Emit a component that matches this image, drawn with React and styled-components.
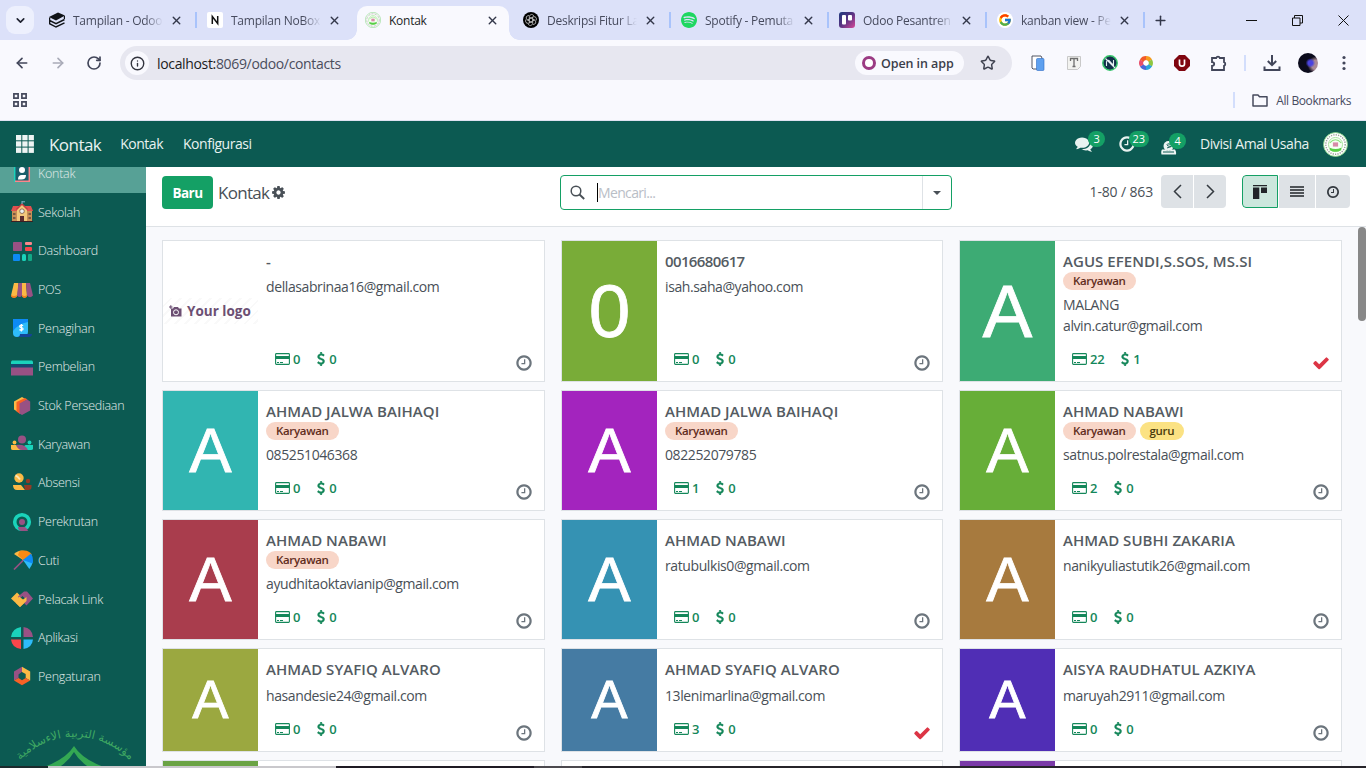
import React from "react";
import styled, { createGlobalStyle, css } from "styled-components";
import { ArrowLeft, ArrowRight, RotateCw, Info, Star, X, Plus, ChevronDown } from "lucide-react";
import { SiSpotify } from "react-icons/si";
import { FcGoogle } from "react-icons/fc";

const GlobalStyle = createGlobalStyle`
  * { box-sizing: border-box; }
  body {
    margin: 0;
    width: 1366px;
    height: 768px;
    overflow: hidden;
    font-family: "Open Sans", "Noto Sans", sans-serif;
    color: #495057;
    background: #f8f9fc;
  }
`;

const Screen = styled.div`
  display: flex;
  flex-direction: column;
  width: 1366px;
  height: 768px;
  overflow: hidden;
`;

/* ---------- Browser tabs ---------- */

const TabStrip = styled.div`
  display: flex;
  align-items: center;
  flex: none;
  height: 40px;
  padding-left: 6px;
  background: #dce1f9;
`;

const TabSearch = styled.div`
  display: flex;
  align-items: center;
  justify-content: center;
  width: 28px;
  height: 28px;
  margin-right: 7px;
  border-radius: 9px;
  background: #edf0fd;
  color: #1f2230;
`;

const TabBox = styled.div`
  position: relative;
  display: flex;
  align-items: center;
  flex: none;
  width: 158px;
  height: 40px;
  padding: 0 0 0 8px;
  color: #474b5e;
  ${(p) =>
    p.$sep &&
    css`
      &::after {
        content: "";
        position: absolute;
        right: 2px;
        top: 12px;
        width: 2px;
        height: 16px;
        background: #a9c3fb;
      }
    `}
  ${(p) =>
    p.$active &&
    css`
      color: #1d1f26;
      &::before {
        content: "";
        position: absolute;
        left: 0;
        right: 6px;
        top: 6px;
        bottom: 0;
        border-radius: 10px 10px 0 0;
        background: #f9f9fe;
      }
    `}
`;

const TabFlare = styled.i`
  position: absolute;
  bottom: 0;
  left: ${(p) => (p.$right ? "152px" : "-10px")};
  width: 10px;
  height: 10px;
  background: radial-gradient(circle at ${(p) => (p.$right ? "100%" : "0")} 0, transparent 9.5px, #f9f9fe 10px);
`;

const Favicon = styled.span`
  position: relative;
  display: flex;
  width: 16px;
  height: 16px;
  margin-right: 8px;
  svg { display: block; }
`;

const TabTitle = styled.span`
  position: relative;
  width: 90px;
  padding-top: 1px;
  overflow: hidden;
  white-space: nowrap;
  font-size: 12px;
  line-height: 18px;
  letter-spacing: -0.25px;
  ${(p) => !p.$solid && css`mask-image: linear-gradient(90deg, #000 80%, transparent 100%);`}
`;

const TabClose = styled.span`
  position: relative;
  display: flex;
  margin-left: 7px;
  color: #33374a;
`;

const WindowControls = styled.div`
  display: flex;
  align-items: center;
  gap: 35px;
  margin-left: auto;
  padding-right: 17px;
  color: #111;
  svg { display: block; }
`;

const NewTab = styled.div`
  display: flex;
  margin-left: 6px;
  color: #33374a;
`;

/* ---------- Browser toolbar ---------- */

const Toolbar = styled.div`
  display: flex;
  align-items: center;
  flex: none;
  height: 46px;
  padding: 0 0 0 14px;
  background: #f9f9fe;
  color: #474b5e;
`;

const NavButton = styled.span`
  display: flex;
  flex: none;
  margin-right: 20px;
  color: ${(p) => (p.$dim ? "#a9abb8" : "#42465a")};
`;

const Omnibox = styled.div`
  display: flex;
  align-items: center;
  flex: none;
  width: 892px;
  height: 34px;
  margin-left: -2px;
  padding-left: 5px;
  border-radius: 17px;
  background: #e7e7f0;
`;

const InfoButton = styled.span`
  display: flex;
  align-items: center;
  justify-content: center;
  width: 24px;
  height: 24px;
  margin-right: 8px;
  border-radius: 12px;
  background: #f9f9fe;
  color: #33353f;
`;

const Url = styled.span`
  font-size: 14px;
  letter-spacing: -0.34px;
  color: #4a4d5c;
  b { font-weight: 400; color: #1b1c22; }
`;

const OpenInApp = styled.span`
  display: flex;
  align-items: center;
  gap: 5px;
  width: 109px;
  height: 24px;
  margin-left: auto;
  padding-left: 7px;
  border-radius: 12px;
  background: #f9f9fe;
  font-size: 12.5px;
  font-weight: 600;
  letter-spacing: -0.08px;
  white-space: nowrap;
  color: #3b3e4a;
`;

const Ring = styled.i`
  width: 14px;
  height: 14px;
  border: 3px solid #9b3b83;
  border-radius: 50%;
  background: #fff;
`;

const StarSlot = styled.span`
  display: flex;
  margin: 0 16px;
  color: #3f4250;
`;

const Extensions = styled.div`
  display: flex;
  align-items: center;
  gap: 20px;
  margin-left: 18px;
  svg { display: block; }
`;

const Divider = styled.i`
  flex: none;
  width: 2px;
  height: 16px;
  margin: 0 17px 0 16px;
  background: #d3defc;
`;

const ToolbarEnd = styled.div`
  display: flex;
  align-items: center;
  svg { display: block; }
`;

const Avatar = styled.i`
  width: 20px;
  height: 20px;
  margin: 0 17px;
  border-radius: 50%;
  background:
    radial-gradient(circle at 62% 50%, #4a43e0 0 14%, transparent 30%),
    radial-gradient(circle at 92% 60%, #a98a96 0 22%, transparent 40%),
    #0b0b1c;
`;

const Bookmarks = styled.div`
  display: flex;
  align-items: center;
  flex: none;
  height: 35px;
  padding: 0 15px 6px 12px;
  border-bottom: 1px solid #dfe2f1;
  background: #f9f9fe;
  font-size: 12px;
  letter-spacing: -0.4px;
  color: #474b5e;
  svg { display: block; }
`;

const BookmarksEnd = styled.div`
  display: flex;
  align-items: center;
  margin-left: auto;
  svg { margin-right: 8px; }
`;

/* ---------- Odoo navbar ---------- */

const Navbar = styled.div`
  display: flex;
  align-items: center;
  flex: none;
  height: 46px;
  padding: 0 18px 0 16px;
  background: #0c5a52;
  color: #e8f2f0;
  font-size: 14px;
`;

const AppTitle = styled.span`
  margin: 0 19px 0 15px;
  font-size: 17px;
  letter-spacing: -0.55px;
`;

const MenuEntry = styled.span`
  margin: -2px 20px 0 0;
  letter-spacing: -0.48px;
`;

const Systray = styled.div`
  display: flex;
  align-items: center;
  margin-left: auto;
`;

const TrayItem = styled.span`
  position: relative;
  display: flex;
  width: ${(p) => p.$w}px;
  margin-top: ${(p) => p.$drop || 0}px;
`;

const TrayBadge = styled.span`
  position: absolute;
  left: ${(p) => p.$x}px;
  top: ${(p) => p.$y}px;
  height: 16px;
  padding: 0 ${(p) => p.$pad || 5.5}px;
  border-radius: 8px;
  background: #14a065;
  color: #fff;
  font-size: 11px;
  line-height: 16px;
`;

const UserName = styled.span`
  margin: -2px 14px 0 0;
  letter-spacing: -0.4px;
`;

/* ---------- Body ---------- */

const Body = styled.div`
  display: flex;
  flex: 1;
  min-height: 0;
`;

const Sidebar = styled.div`
  display: flex;
  flex-direction: column;
  flex: none;
  width: 146px;
  overflow: hidden;
  background: #0c5a52;
`;

const SideList = styled.div`
  flex: none;
  margin-top: -12.9px;
`;

const SideItem = styled.div`
  display: flex;
  align-items: center;
  height: 38.7px;
  padding-left: 11px;
  gap: 5px;
  background: ${(p) => (p.$active ? "#57a196" : "transparent")};
  color: #e2ecea;
  font-size: 12.5px;
  font-weight: 300;
  letter-spacing: -0.26px;
  white-space: nowrap;
  svg { display: block; flex: none; }
`;

const SideLogo = styled.svg`
  display: block;
  flex: none;
  margin-top: 28.5px;
`;

const Main = styled.div`
  display: flex;
  flex-direction: column;
  flex: 1;
  min-width: 0;
`;

const ControlPanel = styled.div`
  display: grid;
  grid-template-columns: 398px 392px 1fr;
  flex: none;
  height: 60px;
  padding: 8px 16px 0;
  border-bottom: 1px solid #dee2e6;
  background: #fff;
`;

const Breadcrumb = styled.div`
  display: flex;
  align-items: center;
  height: 35px;
  font-size: 17px;
  letter-spacing: -0.7px;
  color: #495057;
`;

const PrimaryButton = styled.button`
  width: 51px;
  height: 33px;
  margin: 0 5px 0 0;
  padding: 0;
  border: 0;
  border-radius: 4px;
  background: #14a065;
  color: #fff;
  font: 700 13.5px "Open Sans", "Noto Sans", sans-serif;
  letter-spacing: -0.5px;
`;

const GearSlot = styled.span`
  display: flex;
  margin-left: 3px;
`;

const SearchBox = styled.div`
  display: flex;
  align-items: center;
  height: 35px;
  border: 1px solid #14a065;
  border-radius: 4px;
  padding-left: 9px;
`;

const SearchField = styled.span`
  margin-left: 12px;
  border-left: 1px solid #000;
  font-size: 14px;
  line-height: 19px;
  letter-spacing: -0.65px;
  color: #b9bec6;
`;

const SearchToggle = styled.span`
  display: flex;
  align-items: center;
  justify-content: center;
  width: 29px;
  height: 33px;
  margin-left: auto;
  border-left: 1px solid #dee2e6;
`;

const Caret = styled.i`
  border: 4.5px solid transparent;
  border-top: 4.5px solid #495057;
  border-bottom: 0;
`;

const PagerArea = styled.div`
  display: flex;
  align-items: center;
  justify-content: flex-end;
  height: 33px;
`;

const PagerText = styled.span`
  margin-right: 8px;
  font-size: 14px;
  letter-spacing: -0.15px;
`;

const ButtonGroup = styled.div`
  display: flex;
  gap: 1px;
  margin-left: ${(p) => p.$ml || 0}px;
  border-radius: 4px;
  overflow: hidden;
`;

const GroupButton = styled.span`
  display: flex;
  align-items: center;
  justify-content: center;
  width: ${(p) => p.$w}px;
  height: 33px;
  background: #dee2e6;
  color: #343a40;
  ${(p) =>
    p.$on &&
    css`
      border: 1px solid #14a065;
      border-radius: 4px 0 0 4px;
      background: #cce7dd;
      color: #212529;
    `}
`;

const KanbanWrap = styled.div`
  display: flex;
  justify-content: space-between;
  flex: 1;
  min-height: 0;
  overflow: hidden;
  background: #f8f9fc;
`;

const ScrollThumb = styled.div`
  flex: none;
  width: 8px;
  height: 94px;
  border-radius: 4px;
  background: #888;
`;

const Grid = styled.div`
  display: grid;
  grid-template-columns: 383px 382px 383px;
  grid-template-rows: 142px 121px 121px 104px 104px;
  gap: 8px 16px;
  width: 1180px;
  height: 624px;
  margin: 13px 0 0 16px;
`;

const Card = styled.div`
  display: flex;
  border: 1px solid #dee2e6;
  background: #fff;
`;

const Picture = styled.div`
  display: flex;
  align-items: center;
  justify-content: center;
  flex: none;
  width: 95px;
  padding-top: 1px;
  background: ${(p) => p.$bg};
  color: #fff;
  font-family: "Liberation Sans", Arial, sans-serif;
  font-size: ${(p) => p.$size}px;
  line-height: 1;
  -webkit-text-stroke: 0.8px #fff;
`;

const LogoPlaceholder = styled.div`
  display: flex;
  align-items: center;
  gap: 5px;
  width: 95px;
  height: 26px;
  margin-top: -1px;
  padding-left: 6px;
  white-space: nowrap;
  background: repeating-linear-gradient(135deg, #fff 0 5px, #f9f9f9 5px 7px);
  color: #6c4f73;
  font: 700 13.5px "Open Sans", "Noto Sans", sans-serif;
  letter-spacing: 0;
  -webkit-text-stroke: 0;
  svg { flex: none; }
`;

const Details = styled.div`
  display: flex;
  flex-direction: column;
  flex: 1;
  min-width: 0;
  padding: 11px 12px 8px 8px;
`;

const Name = styled.div`
  margin-bottom: 2px;
  font-size: 15px;
  font-weight: 600;
  line-height: 18px;
  letter-spacing: ${(p) => (p.$digits ? "-0.62px" : "0.05px")};
  white-space: nowrap;
  color: #545b62;
`;

const Tags = styled.div`
  display: flex;
  gap: 4px;
  margin-bottom: 4px;
`;

const Tag = styled.span`
  height: 18px;
  padding: 0 10px;
  border-radius: 9px;
  background: ${(p) => (p.$kind === "guru" ? "#fbe283" : "#f8d6c8")};
  color: ${(p) => (p.$kind === "guru" ? "#4a3c0c" : "#5f2c1c")};
  font-size: 11.5px;
  font-weight: 600;
  line-height: 17px;
  letter-spacing: -0.33px;
`;

const Line = styled.div`
  margin-top: ${(p) => p.$mt || 0}px;
  font-size: 14px;
  line-height: 21px;
  letter-spacing: -0.4px;
  white-space: nowrap;
  color: #495057;
`;

const CardFooter = styled.div`
  display: flex;
  align-items: flex-end;
  margin-top: auto;
  padding-left: 9px;
`;

const Stat = styled.span`
  display: flex;
  align-items: center;
  gap: ${(p) => p.$gap}px;
  margin: 0 17px 4px 0;
  font-size: 13px;
  font-weight: 600;
  line-height: 20px;
  letter-spacing: -0.3px;
  color: #14875a;
`;

const Activity = styled.span`
  display: flex;
  margin-left: auto;
  margin-right: ${(p) => (p.$done ? "-1px" : 0)};
  margin-bottom: 1px;
`;

const Taskbar = styled.div`
  display: flex;
  flex: none;
  height: 2px;
  background: #26242a;
`;

const TaskbarPart = styled.i`
  width: ${(p) => p.$w}px;
  background: ${(p) => p.$bg};
`;

/* ---------- Icons ---------- */

const GLYPHS = {
  clock: ["0 0 1536 1792", "M896 544v448q0 14-9 23t-23 9h-320q-14 0-23-9t-9-23v-64q0-14 9-23t23-9h224v-352q0-14 9-23t23-9h64q14 0 23 9t9 23zm416 352q0-148-73-273t-198-198-273-73-273 73-198 198-73 273 73 273 198 198 273 73 273-73 198-198 73-273zm224 0q0 209-103 385.5t-279.5 279.5-385.5 103-385.5-103-279.5-279.5-103-385.5 103-385.5 279.5-279.5 385.5-103 385.5 103 279.5 279.5 103 385.5z"],
  check: ["0 0 1792 1792", "M1671 566q0 40-28 68l-724 724-136 136q-28 28-68 28t-68-28l-136-136-362-362q-28-28-28-68t28-68l136-136q28-28 68-28t68 28l294 295 656-657q28-28 68-28t68 28l136 136q28 28 28 68z"],
  cog: ["128 0 1536 1792", "M1152 896q0-106-75-181t-181-75-181 75-75 181 75 181 181 75 181-75 75-181zm512-109v222q0 12-8 23t-20 13l-185 28q-19 54-39 91 35 50 107 138 10 12 10 25t-9 23q-27 37-99 108t-94 71q-12 0-26-9l-138-108q-44 23-91 38-16 136-29 186-7 28-36 28h-222q-14 0-24.5-8.5t-11.5-21.5l-28-184q-49-16-90-37l-141 107q-10 9-25 9-14 0-25-11-126-114-165-168-7-10-7-23 0-12 8-23 15-21 51-66.5t54-70.5q-27-50-41-99l-183-27q-13-2-21-12.5t-8-23.5v-222q0-12 8-23t19-13l186-28q14-46 39-92-40-57-107-138-10-12-10-24 0-10 9-23 26-36 98.5-107.5t94.5-71.5q13 0 26 10l138 107q44-23 91-38 16-136 29-186 7-28 36-28h222q14 0 24.5 8.5t11.5 21.5l28 184q49 16 90 37l142-107q9-9 24-9 13 0 25 10 129 119 165 170 7 8 7 22 0 12-8 23-15 21-51 66.5t-54 70.5q26 50 41 98l183 28q13 2 21 12.5t8 23.5z"],
  comments: ["0 0 1792 1792", "M1408 768q0 139-94 257t-256.5 186.5-353.5 68.5q-86 0-176-16-124 88-278 128-36 9-86 16h-3q-11 0-20.5-8t-11.5-21q-1-3-1-6.5t.5-6.5 2-6l2.5-5 3.5-5.5 4-5 4.5-5 4-4.5q5-6 23-25t26-29.5 22.5-29 25-38.5 20.5-44q-124-72-195-177t-71-224q0-139 94-257t256.5-186.5 353.5-68.5 353.5 68.5 256.5 186.5 94 257zm384 256q0 120-71 224.5t-195 176.5q10 24 20.5 44t25 38.5 22.5 29 26 29.5 23 25q1 1 4 4.5t4.5 5 4 5 3.5 5.5l2.5 5 2 6 .5 6.5-1 6.5q-3 14-13 22t-22 7q-50-7-86-16-154-40-278-128-90 16-176 16-271 0-472-132 58 4 88 4 161 0 309-45t264-129q125-92 192-212t67-254q0-77-23-152 129 71 204 178t75 230z"],
  dollar: ["384 0 1024 1792", "M1362 1185q0 153-99.5 263.5t-258.5 136.5v175q0 14-9 23t-23 9h-135q-13 0-22.5-9.5t-9.5-22.5v-175q-66-9-127.5-31t-101.5-44.5-74-48-46.5-37.5-17.5-18q-17-21-2-41l103-135q7-10 23-12 15-2 24 9l2 2q113 99 243 125 37 8 74 8 81 0 142.5-43t61.5-122q0-28-15-53t-33.5-42-58.5-37.5-66-32-80-32.5q-39-16-61.5-25t-61.5-26.5-62.5-31-56.5-35.5-53.5-42.5-43.5-49-35.5-58-21-66.5-8.5-78q0-138 98-242t255-134v-180q0-13 9.5-22.5t22.5-9.5h135q14 0 23 9t9 23v176q57 6 110.5 23t87 33.5 63.5 37.5 39 29 15 14q17 18 5 38l-81 146q-8 15-23 16-14 3-27-7-3-3-14.5-12t-39-26.5-58.5-32-74.5-26-85.5-11.5q-95 0-155 43t-60 111q0 26 8.5 48t29.5 41.5 39.5 33 56 31 60.5 27 70 27.5q53 20 81 31.5t76 35 75.5 42.5 62 50 53 63.5 31.5 76.5 13 94z"],
};

const Glyph = ({ name, w, h, color = "currentColor", stroke = 0 }) => (
  <svg width={w} height={h} viewBox={GLYPHS[name][0]} fill={color} stroke={color} strokeWidth={stroke}>
    <path d={GLYPHS[name][1]} />
  </svg>
);

const CardGlyph = () => (
  <svg width="15" height="12" viewBox="0 0 15 12">
    <rect x="0.6" y="0.6" width="13.8" height="10.8" rx="0.8" fill="none" stroke="#14875a" strokeWidth="1.1" />
    <rect x="0.5" y="3" width="14" height="3" fill="#14875a" />
    <path d="M2 9.500h2M5 9.500h3" stroke="#14875a" strokeWidth="1" />
  </svg>
);

const Seal = ({ size }) => (
  <svg width={size} height={size} viewBox="0 0 24 24">
    <circle cx="12" cy="12" r="11.5" fill="#fff" stroke="#7fd37f" strokeWidth="0.8" />
    <circle cx="12" cy="12" r="9.3" fill="none" stroke="#9aa39a" strokeWidth="1.4" strokeDasharray="1.2 1.1" />
    <circle cx="12" cy="12" r="6.8" fill="#f6fff3" stroke="#8fdc86" strokeWidth="0.7" />
    <path d="M6.5 10.5Q12 4.5 17.500 10.500" fill="none" stroke="#8be07c" strokeWidth="1" />
    <rect x="9.500" y="10" width="5" height="4" fill="#d88aa8" />
    <path d="M6.500 15q5.500 2.500 11 0v2.500q-5.500 3-11 0z" fill="#58cf45" />
  </svg>
);

const appIcons = {
  kontak: (
    <>
      <rect x="3" y="2" width="16" height="18" rx="1.500" fill="#1a5f6b" />
      <path d="M3.700 2v18" stroke="#1ad3bb" strokeWidth="1.500" />
      <path d="M4 19.300h14.300V2" fill="none" stroke="#fc868b" strokeWidth="1.500" />
      <circle cx="11" cy="8" r="3" fill="#fff" />
      <path d="M7 17.500q0-5 4.500-4.500h3.500q0 4.500-4.500 4.500z" fill="#fff" />
    </>
  ),
  sekolah: (
    <>
      <path d="M1 9h20v11H1z" fill="#c99056" />
      <path d="M2 5h18l2 5H0z" fill="#e0524f" />
      <path d="M11 3l5 5v12H6V8z" fill="#f3c87c" />
      <path d="M5.500 8.500L11 3l5.500 5.500" fill="none" stroke="#c43d42" strokeWidth="1.500" />
      <path d="M11 0v3M11 .8h3" stroke="#7fb2c8" strokeWidth="1" />
      <circle cx="11" cy="10.200" r="2.300" fill="#eef2f2" stroke="#6b4a3a" strokeWidth=".7" />
      <path d="M9 15h4v5H9z" fill="#5a2c2f" />
      <path d="M2 12h2.500v2H2zM2 16h2.500v2H2zM17.500 12H20v2h-2.500zM17.500 16H20v2h-2.500z" fill="#7a5a44" />
      <path d="M0 20.500h22" stroke="#3a2023" strokeWidth="1" />
    </>
  ),
  dashboard: (
    <>
      <rect x="2" y="2" width="9" height="9" rx=".7" fill="#985184" />
      <rect x="14" y="2" width="7" height="3" rx="1" fill="#fc868b" />
      <rect x="14" y="7" width="7" height="4" rx="1" fill="#f8464b" />
      <rect x="2" y="14" width="7" height="7" rx="1" fill="#0d8af5" />
      <rect x="11" y="14" width="4" height="7" rx="1.500" fill="#1ad3bb" />
      <rect x="17" y="14" width="4" height="7" rx="1" fill="#12a886" />
    </>
  ),
  pos: (
    <>
      <path d="M3 4h4.500l-1 12.500q-3 3.500-6.500 0z" fill="#fbb945" />
      <path d="M7.500 4H11v12.500q-2 3-5 0z" fill="#985184" />
      <path d="M11 4h4l1 12.500q-2.500 3-5 0z" fill="#fbb945" />
      <path d="M15 4h4l3 12.500q-3 3.500-6 0z" fill="#985184" />
      <path d="M0 16q3 2 6 0v1.500q-3 3-6 0z" fill="#f58220" />
      <path d="M11 16q2.500 2 5 0v1.500q-2.500 3-5 0z" fill="#f58220" />
    </>
  ),
  penagihan: (
    <>
      <path d="M2 2h15v13q0 2-2 5H6q-4 0-4-4z" fill="#2ebcfa" />
      <path d="M2 2h15v3Q7 7 2 14z" fill="#0d8af5" />
      <path d="M9 17h12q0 3-3.500 3H6q3 0 3-3z" fill="#144496" />
      <path d="M12 8.800c-.8-1-3.300-.8-3.300.6 0 1.700 3.400.9 3.400 2.600 0 1.400-2.700 1.500-3.600.5M10.400 7v7.500" fill="none" stroke="#fff" strokeWidth="1.200" />
    </>
  ),
  pembelian: (
    <>
      <path d="M0 11h22v8.500H0z" fill="#985184" />
      <path d="M0 8h22v3.500H0z" fill="#144a70" />
      <path d="M1 4.500h20l1 1V8H0V5.500z" fill="#1ad3bb" />
    </>
  ),
  stok: (
    <>
      <path d="M11 2l3 1.700-7 4V17L3 14.500V6.500z" fill="#fbb945" />
      <path d="M14 3l2.500 1.500L9 9v10L5.500 16.500V7z" fill="#f86126" />
      <path d="M11 20l-2.500-1.500V8.500L16 4.500l3.200 2V15.500z" fill="#985184" />
    </>
  ),
  karyawan: (
    <>
      <circle cx="11" cy="6.500" r="4" fill="#985184" />
      <circle cx="3.500" cy="9.500" r="1.900" fill="#fbb945" />
      <circle cx="18.500" cy="9.500" r="1.900" fill="#1ad3bb" />
      <path d="M22 12h-7q-2 0-4 5h9q2 0 2-1.500z" fill="#1ad3bb" />
      <path d="M5 12q9-1.500 12 5H10q-4 0-5-5z" fill="#985184" />
      <path d="M0 12h5q2 5 6 5H2q-2 0-2-1.500z" fill="#fbb945" />
    </>
  ),
  absensi: (
    <>
      <circle cx="8" cy="6" r="4.700" fill="#fbb945" />
      <path d="M4.500 3.500q2 .5 4.500 4" fill="none" stroke="#fde6b5" strokeWidth="2" />
      <circle cx="17" cy="9" r="2.200" fill="#953b24" />
      <path d="M2 13h8l4 5H6q-4 0-4-5z" fill="#fbb945" />
      <path d="M13 13h7.500v2q0 3-3 3H14z" fill="#953b24" />
    </>
  ),
  perekrutan: (
    <>
      <circle cx="11" cy="11" r="7.300" fill="none" stroke="#1ad3bb" strokeWidth="3.600" />
      <circle cx="11" cy="11" r="3" fill="#985184" />
      <path d="M7 16h6q2.500 0 4 4H11q-4 0-4-4z" fill="#985184" />
    </>
  ),
  cuti: (
    <>
      <path d="M3 20.500L12.500 11" stroke="#985184" strokeWidth="1.700" />
      <path d="M3 5Q9-1 17 3l-5 8z" fill="#fbb945" />
      <path d="M8.500 2Q18 0 21 6l-9 5-5-5z" fill="#f88a13" />
      <path d="M21.800 12.500q-.5 4-3.500 7.500L12 11l5-2z" fill="#2ebcfa" />
      <path d="M20 4.500q3 5 1.500 10L12 11z" fill="#0d8af5" />
    </>
  ),
  link: (
    <>
      <path d="M6 4.500l-6 6L9 19l4-4-5.500-5 2.200-2z" fill="#fbb945" />
      <path d="M13 3.500h3l6 7-6.500 7-4-4 3-2.500-3-3-3 3L7 8.500z" fill="#985184" />
      <path d="M8 8.500l4 3 3.500-2.500v4L9 19l-4-4z" fill="#fbb945" />
    </>
  ),
  aplikasi: (
    <>
      <path d="M10 0v10H0Q.8 1.500 10 0z" fill="#1ad3bb" />
      <path d="M12.500 0v10H22Q21 1 12.500 0z" fill="#985184" />
      <path d="M10 22V12.500H0Q1 21 10 22z" fill="#f8464b" />
      <path d="M12.500 22V12.500H22Q21 21 12.500 22z" fill="#2ebcfa" />
    </>
  ),
  pengaturan: (
    <>
      <path d="M11 1.800v5L7.500 9.500V13L3 15.500v-9z" fill="#985184" />
      <path d="M11 1.800L19.200 6.500v9L14.700 13V9L11 7z" fill="#fbb945" />
      <path d="M3 15.500L7.500 13 11 15.200 14.700 13l4.500 2.500L11 20.200z" fill="#f86126" />
    </>
  ),
};

const sideItems = [
  ["Kontak", "kontak"],
  ["Sekolah", "sekolah"],
  ["Dashboard", "dashboard"],
  ["POS", "pos"],
  ["Penagihan", "penagihan"],
  ["Pembelian", "pembelian"],
  ["Stok Persediaan", "stok"],
  ["Karyawan", "karyawan"],
  ["Absensi", "absensi"],
  ["Perekrutan", "perekrutan"],
  ["Cuti", "cuti"],
  ["Pelacak Link", "link"],
  ["Aplikasi", "aplikasi"],
  ["Pengaturan", "pengaturan"],
];

const favicons = {
  stack: (
    <svg width="16" height="16" viewBox="0 0 16 16">
      <path d="M0 5l9-4.500L16 3.500 7 8.500z" fill="#101318" />
      <path d="M.6 5.500v3L7 11.700l8.500-4.200M.6 9v2.700L7 15l8.500-4.200M15.500 4v3" fill="none" stroke="#101318" strokeWidth="1.400" />
    </svg>
  ),
  nobox: (
    <svg width="16" height="16" viewBox="0 0 16 16">
      <rect width="16" height="16" rx="2" fill="#fff" />
      <path d="M5.300 12V4.500l5.400 7V4" fill="none" stroke="#111" strokeWidth="1.500" />
    </svg>
  ),
  seal: <Seal size={16} />,
  gpt: (
    <svg width="16" height="16" viewBox="0 0 16 16">
      <circle cx="8" cy="8" r="8" fill="#000" />
      <g fill="none" stroke="#ddd" strokeWidth=".7">
        {[0, 60, 120, 180, 240, 300].map((a) => (
          <path key={a} transform={`rotate(${a} 8 8)`} d="M6.300 7.200V4.300Q8 .8 11 3.800M6.300 5l3.400 2" />
        ))}
      </g>
    </svg>
  ),
  spotify: <SiSpotify size={16} color="#1ed760" />,
  trello: (
    <svg width="16" height="16" viewBox="0 0 16 16">
      <defs>
        <linearGradient id="tr" x1="0" y1="0" x2="1" y2="1">
          <stop offset="0" stopColor="#1d3a7d" />
          <stop offset=".5" stopColor="#5b3484" />
          <stop offset="1" stopColor="#d94a9a" />
        </linearGradient>
      </defs>
      <rect width="16" height="16" rx="3" fill="url(#tr)" />
      <rect x="3" y="3" width="4" height="9.500" rx="1" fill="#fff" />
      <rect x="9" y="3" width="4" height="5.500" rx="1" fill="#fff" />
    </svg>
  ),
  google: (
    <svg width="16" height="16" viewBox="0 0 16 16">
      <circle cx="8" cy="8" r="8" fill="#fff" />
      <FcGoogle x="1" y="1" size={14} />
    </svg>
  ),
};

const tabs = [
  { icon: "stack", title: "Tampilan - Odoo", sep: true },
  { icon: "nobox", title: "Tampilan NoBox" },
  { icon: "seal", title: "Kontak", active: true },
  { icon: "gpt", title: "Deskripsi Fitur La", sep: true },
  { icon: "spotify", title: "Spotify - Pemuta", sep: true },
  { icon: "trello", title: "Odoo Pesantren", sep: true },
  { icon: "google", title: "kanban view - Pe", sep: true },
];

const K = "Karyawan";
const contacts = [
  { name: "-", lines: ["dellasabrinaa16@gmail.com"], cards: 0, sales: 0, logo: true },
  { name: "0016680617", lines: ["isah.saha@yahoo.com"], cards: 0, sales: 0, bg: "#79ac38" },
  { name: "AGUS EFENDI,S.SOS, MS.SI", tags: [K], lines: ["MALANG", "alvin.catur@gmail.com"], cards: 22, sales: 1, bg: "#3dab74", done: true },
  { name: "AHMAD JALWA BAIHAQI", tags: [K], lines: ["085251046368"], cards: 0, sales: 0, bg: "#31b5b1" },
  { name: "AHMAD JALWA BAIHAQI", tags: [K], lines: ["082252079785"], cards: 1, sales: 0, bg: "#a324be" },
  { name: "AHMAD NABAWI", tags: [K, "guru"], lines: ["satnus.polrestala@gmail.com"], cards: 2, sales: 0, bg: "#67ae38" },
  { name: "AHMAD NABAWI", tags: [K], lines: ["ayudhitaoktavianip@gmail.com"], cards: 0, sales: 0, bg: "#a93d4d" },
  { name: "AHMAD NABAWI", lines: ["ratubulkis0@gmail.com"], cards: 0, sales: 0, bg: "#3592b3" },
  { name: "AHMAD SUBHI ZAKARIA", lines: ["nanikyuliastutik26@gmail.com"], cards: 0, sales: 0, bg: "#a77a3e" },
  { name: "AHMAD SYAFIQ ALVARO", lines: ["hasandesie24@gmail.com"], cards: 0, sales: 0, bg: "#9ba840" },
  { name: "AHMAD SYAFIQ ALVARO", lines: ["13lenimarlina@gmail.com"], cards: 3, sales: 0, bg: "#457ba3", done: true },
  { name: "AISYA RAUDHATUL AZKIYA", lines: ["maruyah2911@gmail.com"], cards: 0, sales: 0, bg: "#502eb5" },
];

const letterSizes = [74.7, 63.5, 63.5, 54.4];

const ContactCard = ({ c, row }) => (
  <Card>
    <Picture $bg={c.logo ? "#fff" : c.bg} $size={letterSizes[row]}>
      {c.logo ? (
        <LogoPlaceholder>
          <svg width="13" height="12" viewBox="0 0 13 12">
            <path d="M2 3.500h2L5 2h4l1 1.500h2.500V11.500H2z" fill="#6c4f73" />
            <circle cx="7" cy="7.300" r="2.500" fill="#6c4f73" stroke="#fff" strokeWidth="1" />
            <path d="M0 2h3.500M1.800.3v3.500" stroke="#6c4f73" strokeWidth="1.100" />
          </svg>
          Your logo
        </LogoPlaceholder>
      ) : (
        c.name[0]
      )}
    </Picture>
    <Details>
      <Name $digits={/^\d/.test(c.name)}>{c.name}</Name>
      {c.tags && (
        <Tags>
          {c.tags.map((t) => (
            <Tag key={t} $kind={t}>{t}</Tag>
          ))}
        </Tags>
      )}
      {c.lines.map((l, i) => (
        <Line key={l} $mt={c.tags || i ? 0 : row === 3 ? 5 : 4}>{l}</Line>
      ))}
      <CardFooter>
        <Stat $gap={3}><CardGlyph />{c.cards}</Stat>
        <Stat $gap={4}><Glyph name="dollar" w={8} h={14} stroke={30} />{c.sales}</Stat>
        <Activity $done={c.done}>
          {c.done ? <Glyph name="check" w={18} h={18} color="#dc3545" /> : <Glyph name="clock" w={16} h={18} color="#6c757d" />}
        </Activity>
      </CardFooter>
    </Details>
  </Card>
);

export default function App() {
  return (
    <Screen>
      <GlobalStyle />
      <TabStrip>
        <TabSearch><ChevronDown size={13} strokeWidth={3} /></TabSearch>
        {tabs.map((t) => (
          <TabBox key={t.title} $active={t.active} $sep={t.sep}>
            {t.active && <><TabFlare /><TabFlare $right /></>}
            <Favicon>{favicons[t.icon]}</Favicon>
            <TabTitle $solid={t.active}>{t.title}</TabTitle>
            <TabClose><X size={13} strokeWidth={2.6} /></TabClose>
          </TabBox>
        ))}
        <NewTab><Plus size={15} strokeWidth={2.400} /></NewTab>
        <WindowControls>
          <svg width="11" height="11"><path d="M0 5.500h11" stroke="#111" /></svg>
          <svg width="11" height="11"><path d="M.5 3h7.500v7.500H.5zM2.500 3V.5h8V8H8" fill="none" stroke="#111" /></svg>
          <svg width="11" height="11"><path d="M.5.5l10 10M10.500.5l-10 10" stroke="#111" /></svg>
        </WindowControls>
      </TabStrip>

      <Toolbar>
        <NavButton><ArrowLeft size={16} strokeWidth={2.500} /></NavButton>
        <NavButton $dim><ArrowRight size={16} strokeWidth={2.500} /></NavButton>
        <NavButton><RotateCw size={16} strokeWidth={2.500} /></NavButton>
        <Omnibox>
          <InfoButton><Info size={15} strokeWidth={2.200} /></InfoButton>
          <Url><b>localhost:</b>8069/odoo/contacts</Url>
          <OpenInApp><Ring />Open in app</OpenInApp>
          <StarSlot><Star size={16} strokeWidth={2.200} /></StarSlot>
        </Omnibox>
        <Extensions>
          <svg width="16" height="16" viewBox="0 0 16 16">
            <path d="M2 1h9l1 2v11H3l-1-1z" fill="#fff" stroke="#3d4150" strokeWidth=".9" />
            <rect x="6.500" y="3.500" width="7.500" height="12" rx="1" fill="#5ea0ef" stroke="#2d6cc4" strokeWidth=".6" />
          </svg>
          <svg width="16" height="16" viewBox="0 0 16 16">
            <path d="M1.500 1.500h13v10l-3 3h-10z" fill="#f3f3f0" stroke="#c9c9c9" />
            <path d="M4.500 6V3.500h7V6M8 3.500v8M6.500 11.500h3" fill="none" stroke="#6e6e6e" strokeWidth="1.300" />
          </svg>
          <svg width="16" height="16" viewBox="0 0 16 16">
            <circle cx="8" cy="8" r="7.200" fill="#12304a" stroke="#36c46b" strokeWidth="1.500" />
            <path d="M4.500 11V6.500M4.500 6.500Q6 4 8 6.500T11.500 10V5M3.500 3.500l9.500 9.500" fill="none" stroke="#e4eef2" strokeWidth="1.100" />
          </svg>
          <svg width="16" height="16" viewBox="0 0 16 16">
            <g fill="none" strokeWidth="4.300">
              <path d="M8 3.200A4.800 4.800 0 0 1 12.200 5.600" stroke="#f79a1e" />
              <path d="M12.100 5.500A4.800 4.800 0 0 1 12.100 10.400" stroke="#8fc640" />
              <path d="M12.200 10.300A4.800 4.800 0 0 1 8 12.800" stroke="#2aa5dc" />
              <path d="M8 12.800A4.800 4.800 0 0 1 3.800 10.400" stroke="#4b68d8" />
              <path d="M3.900 10.500A4.800 4.800 0 0 1 3.900 5.500" stroke="#e8506c" />
              <path d="M3.800 5.600A4.800 4.800 0 0 1 8 3.200" stroke="#f25a2a" />
            </g>
            <circle cx="8" cy="8" r="2.500" fill="#fff" />
          </svg>
          <svg width="16" height="16" viewBox="0 0 16 16">
            <path d="M5 0h6l5 5v6l-5 5H5l-5-5V5z" fill="#800610" />
            <path d="M5.500 4.500v4.500q0 2.200 2.500 2.200t2.500-2.200V4.500" fill="none" stroke="#fff" strokeWidth="1.700" />
          </svg>
          <svg width="18" height="18" viewBox="0 0 18 18" fill="none" stroke="#42465a" strokeWidth="1.800">
            <path d="M2 4h4.200a1.900 1.900 0 0 1 3.600 0H14v4.200a1.900 1.900 0 0 1 0 3.600V16H2v-4.200q2.200-.3 2.200-1.900T2 8.200z" />
          </svg>
        </Extensions>
        <Divider />
        <ToolbarEnd>
          <svg width="18" height="18" viewBox="0 0 18 18" fill="none" stroke="#42465a" strokeWidth="2">
            <path d="M9 1v10M4.800 7L9 11.200 13.200 7M1.500 12.500V16h15v-3.500" />
          </svg>
          <Avatar />
          <svg width="18" height="16" viewBox="0 0 18 16" fill="#42465a">
            <circle cx="9" cy="2.500" r="1.600" /><circle cx="9" cy="8" r="1.600" /><circle cx="9" cy="13.500" r="1.600" />
          </svg>
        </ToolbarEnd>
      </Toolbar>

      <Bookmarks>
        <svg width="16" height="16" viewBox="0 0 16 16" fill="none" stroke="#474b5e" strokeWidth="1.700">
          <path d="M1.900 1.900h4.200v4.200H1.900zM9.900 1.900h4.200v4.200H9.900zM1.900 9.900h4.200v4.200H1.900zM9.900 9.900h4.200v4.200H9.900z" />
        </svg>
        <BookmarksEnd>
          <Divider />
          <svg width="16" height="13" viewBox="0 0 16 13" fill="none" stroke="#474b5e" strokeWidth="1.500">
            <path d="M1 1h5l1.500 1.700H15v9.300H1z" strokeLinejoin="round" />
          </svg>
          All Bookmarks
        </BookmarksEnd>
      </Bookmarks>

      <Navbar>
        <svg width="18" height="18" viewBox="0 0 18 18" fill="#eef4f3">
          {[0, 6.300, 12.600].map((y) => [0, 6.300, 12.600].map((x) => <rect key={`${x}-${y}`} x={x} y={y} width="5.300" height="5.300" />))}
        </svg>
        <AppTitle>Kontak</AppTitle>
        <MenuEntry>Kontak</MenuEntry>
        <MenuEntry>Konfigurasi</MenuEntry>
        <Systray>
          <TrayItem $w={44}>
            <Glyph name="comments" w={18} h={18} />
            <TrayBadge $x={13} $y={-4}>3</TrayBadge>
          </TrayItem>
          <TrayItem $w={42}>
            <Glyph name="clock" w={16} h={18} />
            <TrayBadge $x={10} $y={-4} $pad={3.500}>23</TrayBadge>
          </TrayItem>
          <TrayItem $w={39} $drop={7}>
            <svg width="16" height="16" viewBox="0 0 16 16" fill="#eef4f3">
              <circle cx="7.500" cy="6" r="5" />
              <path d="M1 9.500h3.500q3 2.800 6 0H14q1.500 2 1 5H.5q-.8-3 .5-5z" />
              <path d="M2 12h11" stroke="#0c5a52" strokeWidth="1" />
              <path d="M9 4.200q-3-1-3 .5t3 1.700-3 1.500" fill="none" stroke="#0c5a52" strokeWidth=".9" />
            </svg>
            <TrayBadge $x={8} $y={-7}>4</TrayBadge>
          </TrayItem>
          <UserName>Divisi Amal Usaha</UserName>
          <Seal size={25} />
        </Systray>
      </Navbar>

      <Body>
        <Sidebar>
          <SideList>
            {sideItems.map(([label, icon], i) => (
              <SideItem key={label} $active={i === 0}>
                <svg width="22" height="22" viewBox="0 0 22 22">{appIcons[icon]}</svg>
                {label}
              </SideItem>
            ))}
          </SideList>
          <SideLogo width="146" height="60" viewBox="0 0 146 60">
            <defs>
              <path id="arc" d="M8 53A76 76 0 0 1 142 53" />
            </defs>
            <text fill="#3fa862" fontSize="11.5" fontFamily="DejaVu Sans, sans-serif" textAnchor="middle" direction="rtl">
              <textPath href="#arc" startOffset="50%">مؤسسة التربية الاءسلامية</textPath>
            </text>
            <path d="M74 22q8 13 30 21H44q22-8 30-21z" fill="#34a853" />
            <path d="M74 28q5 9 16 16H58q11-7 16-16z" fill="#0c5a52" />
          </SideLogo>
        </Sidebar>
        <Main>
          <ControlPanel>
            <Breadcrumb>
              <PrimaryButton>Baru</PrimaryButton>
              Kontak
              <GearSlot><Glyph name="cog" w={13} h={15} /></GearSlot>
            </Breadcrumb>
            <SearchBox>
              <svg width="15" height="15" viewBox="0 0 15 15" fill="none" stroke="#495057" strokeWidth="1.500">
                <circle cx="6" cy="6" r="4.800" /><path d="M9.500 9.500l4.700 4.500" strokeWidth="1.900" />
              </svg>
              <SearchField>Mencari...</SearchField>
              <SearchToggle><Caret /></SearchToggle>
            </SearchBox>
            <PagerArea>
              <PagerText>1-80 / 863</PagerText>
              <ButtonGroup>
                <GroupButton $w={32}>
                  <svg width="9" height="15" viewBox="0 0 9 15" fill="none" stroke="#343a40" strokeWidth="1.500"><path d="M8 1L1.500 7.500 8 14" /></svg>
                </GroupButton>
                <GroupButton $w={32}>
                  <svg width="9" height="15" viewBox="0 0 9 15" fill="none" stroke="#343a40" strokeWidth="1.500"><path d="M1 1l6.500 6.500L1 14" /></svg>
                </GroupButton>
              </ButtonGroup>
              <ButtonGroup $ml={16}>
                <GroupButton $w={36} $on>
                  <svg width="14" height="14" viewBox="0 0 14 14" fill="#212529">
                    <path d="M0 0h14v1.200H0zM0 2.500h6.300V14H0zM8 2.500h6V8H8z" />
                  </svg>
                </GroupButton>
                <GroupButton $w={36}>
                  <svg width="14" height="11" viewBox="0 0 14 11"><path d="M0 1h14M0 4h14M0 7h14M0 10h14" stroke="#212529" strokeWidth="1.700" /></svg>
                </GroupButton>
                <GroupButton $w={34}><Glyph name="clock" w={12} h={14} /></GroupButton>
              </ButtonGroup>
            </PagerArea>
          </ControlPanel>
          <KanbanWrap>
            <Grid>
              {contacts.map((c, i) => (
                <ContactCard key={i} c={c} row={Math.floor(i / 3)} />
              ))}
              <Card><Picture $bg="#6aa344" $size={54.400} /></Card>
              <Card />
              <Card><Picture $bg="#7a3aa8" $size={54.400} /></Card>
            </Grid>
            <ScrollThumb />
          </KanbanWrap>
        </Main>
      </Body>
      <Taskbar>
        <TaskbarPart $w={48} $bg="#1b2a2c" />
        <TaskbarPart $w={288} $bg="#c9c8cc" />
        <TaskbarPart $w={198} $bg="#1f1b24" />
        <TaskbarPart $w={48} $bg="#4b494e" />
      </Taskbar>
    </Screen>
  );
}
